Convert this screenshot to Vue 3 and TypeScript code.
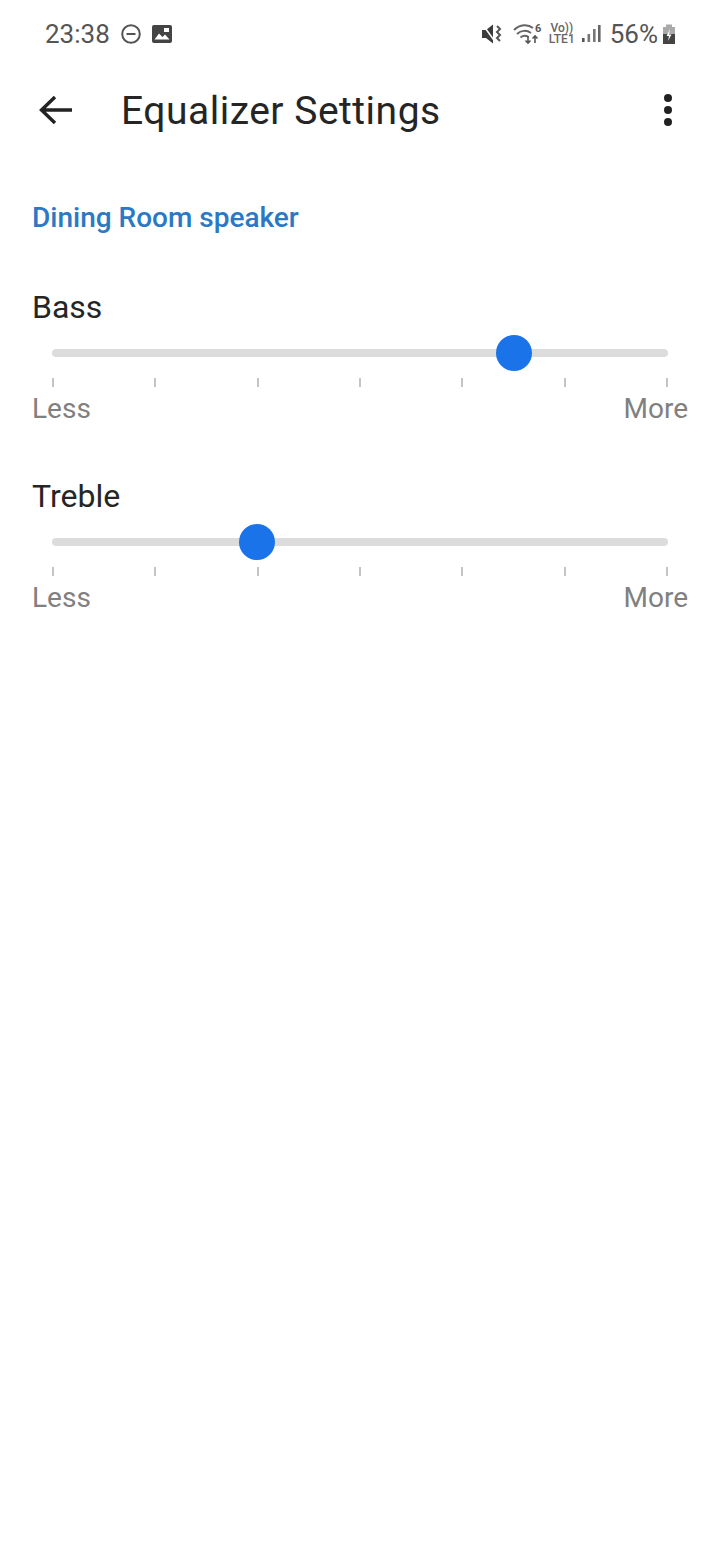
<script setup lang="ts">
interface Band {
  name: string;
  value: number;
}

const bands: Band[] = [
  { name: 'Bass', value: 75 },
  { name: 'Treble', value: 33.3 },
];

const ticks = [0, 1, 2, 3, 4, 5, 6];
</script>

<template>
  <div class="page">
    <div class="status-bar">
      <div class="status-left">
        <span class="clock">23:38</span>
        <svg class="dnd" width="22" height="22" viewBox="0 0 22 22">
          <circle cx="11" cy="11" r="8.8" fill="none" stroke="#555" stroke-width="2" />
          <rect x="6.5" y="10" width="9" height="2" fill="#555" />
        </svg>
        <svg class="gallery" width="22" height="20" viewBox="0 0 22 20">
          <rect x="1" y="1" width="20" height="18" rx="2" fill="#444" />
          <path d="M3.5 15.5 L8 9.5 L11.5 13 L14 10.5 L18.5 15.5 Z" fill="#fff" />
          <rect x="13" y="4" width="5" height="4" fill="#fff" />
        </svg>
      </div>
      <div class="status-right">
        <svg class="mute" width="23" height="22" viewBox="0 0 23 22">
          <path d="M1 7 H5 L12 1.5 V20.5 L5 15 H1 Z" fill="#3c3c3c" />
          <path d="M2 2 L15 20" stroke="#fff" stroke-width="1.5" />
          <path d="M16 3 L19 6 L16 9 L19 12 L16 15 L19 18" fill="none" stroke="#555" stroke-width="2" />
        </svg>
        <svg width="30" height="22" viewBox="0 0 30 22">
          <path d="M1 7 C7 1 15 1 20 5" fill="none" stroke="#666" stroke-width="2" />
          <path d="M4 11 C8 7 14 7 18 10" fill="none" stroke="#666" stroke-width="2" />
          <path d="M7.5 14.5 C10 12.5 13 12.5 15.5 14" fill="none" stroke="#666" stroke-width="2" />
          <path d="M15 13 V20 M12.5 17.5 L15 20 L17.5 17.5" fill="none" stroke="#555" stroke-width="1.6" />
          <path d="M22 13 V20 M19.5 15.5 L22 13 L24.5 15.5" fill="none" stroke="#555" stroke-width="1.6" />
          <text x="22" y="9" class="wifi-six">6</text>
        </svg>
        <div class="volte"><span>Vo))</span><span>LTE1</span></div>
        <svg class="bars" width="20" height="20" viewBox="0 0 20 20">
          <rect x="1" y="14" width="2.6" height="4" fill="#555" />
          <rect x="6.5" y="10" width="2.6" height="8" fill="#777" />
          <rect x="12" y="5" width="2.6" height="13" fill="#777" />
          <rect x="17" y="1" width="2.6" height="17" fill="#666" />
        </svg>
        <span class="battery-text">56%</span>
        <svg class="battery" width="14" height="21" viewBox="0 0 14 21">
          <rect x="4" y="0.5" width="6" height="3" fill="#aaa" />
          <rect x="1" y="3" width="12" height="8" fill="#aaa" />
          <rect x="1" y="10" width="12" height="10" fill="#444" />
          <path d="M8 5 L4.5 12 H7 L6 17 L9.5 10.5 H7 Z" fill="#fff" />
        </svg>
      </div>
    </div>

    <div class="toolbar">
      <svg class="back" width="36" height="32" viewBox="0 0 36 32">
        <path d="M34 16 H4 M17 3 L3.5 16 L17 29" fill="none" stroke="#222" stroke-width="3.4" />
      </svg>
      <span class="title">Equalizer Settings</span>
      <svg class="more" width="12" height="34" viewBox="0 0 12 34">
        <circle cx="6" cy="5" r="4" fill="#222" />
        <circle cx="6" cy="17" r="4" fill="#222" />
        <circle cx="6" cy="29" r="4" fill="#222" />
      </svg>
    </div>

    <div class="device-name">Dining Room speaker</div>

    <div v-for="band in bands" :key="band.name" class="band">
      <div class="band-name">{{ band.name }}</div>
      <div class="track">
        <div class="thumb" :style="{ left: band.value + '%' }"></div>
      </div>
      <div class="ticks">
        <i v-for="t in ticks" :key="t"></i>
      </div>
      <div class="labels">
        <span>Less</span>
        <span>More</span>
      </div>
    </div>
  </div>
</template>

<style>
html,
body {
  background: #fff;
}
</style>

<style scoped>
.page {
  width: 720px;
  height: 1560px;
  overflow: hidden;
  background: #fff;
  font-family: Roboto, "Liberation Sans", sans-serif;
}

.status-bar {
  height: 68px;
  display: flex;
  align-items: center;
  justify-content: space-between;
  padding: 0 44px 0 45px;
  color: #555;
}

.status-left,
.status-right {
  display: flex;
  align-items: center;
}

.clock {
  font-size: 26px;
  margin-right: 10px;
}

.dnd {
  margin-right: 9px;
}

.status-right {
  gap: 9px;
}

.wifi-six {
  font: 700 11px Roboto, sans-serif;
  fill: #555;
}

.volte {
  display: flex;
  flex-direction: column;
  margin-left: -3px;
  font-size: 12px;
  font-weight: 500;
  line-height: 11px;
  color: #666;
  align-items: center;
}

.bars {
  margin-left: -3px;
}

.battery-text {
  font-size: 26px;
  margin-right: -5px;
}

.toolbar {
  height: 84px;
  display: flex;
  align-items: center;
  padding: 0 46px 0 38px;
}

.title {
  font-size: 39px;
  letter-spacing: 0.5px;
  color: #252525;
  margin: 2px 0 0 47px;
  flex: 1;
}

.device-name {
  margin: 48px 32px 0;
  font-size: 28px;
  line-height: 36px;
  font-weight: 500;
  color: #2b78c5;
}

.band {
  margin-top: 52px;
  padding: 0 32px;
}

.band + .band {
  margin-top: 50px;
}

.band-name {
  font-size: 32px;
  line-height: 38px;
  color: #252525;
}

.track {
  position: relative;
  height: 8px;
  margin: 23px 20px 0;
  border-radius: 4px;
  background: #dcdcdc;
}

.thumb {
  position: absolute;
  top: 4px;
  width: 36px;
  height: 36px;
  border-radius: 50%;
  background: #1a73e8;
  transform: translate(-50%, -50%);
}

.ticks {
  display: flex;
  justify-content: space-between;
  margin: 21px 20px 0;
}

.ticks i {
  display: block;
  width: 2px;
  height: 9px;
  background: #c4c4c4;
}

.labels {
  display: flex;
  justify-content: space-between;
  margin-top: 4px;
  font-size: 28px;
  line-height: 36px;
  color: #808080;
}
</style>
